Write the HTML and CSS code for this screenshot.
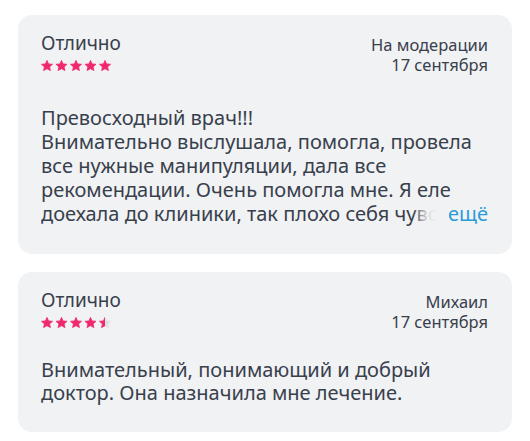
FILE: index.html
```html
<!DOCTYPE html>
<html lang="ru">
<head>
<meta charset="utf-8">
<link rel="stylesheet" href="styles.css">
</head>
<body>
<div class="list">
  <div class="card">
    <div class="head">
      <div class="left">
        <div class="title">Отлично</div>
        <svg class="stars" width="70" height="11" viewBox="0 0 70 11">
          <g fill="#f0286e" stroke="#f0286e" stroke-width="0.8" stroke-linejoin="round">
            <path transform="translate(0.5,0)" d="M5.5 0.4 L7.09 3.92 L11.02 4.31 L8.07 6.93 L8.91 10.59 L5.5 8.7 L2.09 10.59 L2.93 6.93 L-0.02 4.31 L3.91 3.92 Z"/>
            <path transform="translate(15,0)" d="M5.5 0.4 L7.09 3.92 L11.02 4.31 L8.07 6.93 L8.91 10.59 L5.5 8.7 L2.09 10.59 L2.93 6.93 L-0.02 4.31 L3.91 3.92 Z"/>
            <path transform="translate(29.5,0)" d="M5.5 0.4 L7.09 3.92 L11.02 4.31 L8.07 6.93 L8.91 10.59 L5.5 8.7 L2.09 10.59 L2.93 6.93 L-0.02 4.31 L3.91 3.92 Z"/>
            <path transform="translate(44,0)" d="M5.5 0.4 L7.09 3.92 L11.02 4.31 L8.07 6.93 L8.91 10.59 L5.5 8.7 L2.09 10.59 L2.93 6.93 L-0.02 4.31 L3.91 3.92 Z"/>
            <path transform="translate(58.5,0)" d="M5.5 0.4 L7.09 3.92 L11.02 4.31 L8.07 6.93 L8.91 10.59 L5.5 8.7 L2.09 10.59 L2.93 6.93 L-0.02 4.31 L3.91 3.92 Z"/>
          </g>
        </svg>
      </div>
      <div class="meta">На модерации<br>17 сентября</div>
    </div>
    <div class="body clamp">
      <p>Превосходный врач!!!<br>Внимательно выслушала, помогла, провела все нужные манипуляции, дала все рекомендации. Очень помогла мне. Я еле <span class="last">доехала до клиники, так плохо себя чувствовала, а ушла совсем другим человеком.</span></p>
      <span class="more">ещё</span>
    </div>
  </div>
  <div class="card">
    <div class="head">
      <div class="left">
        <div class="title">Отлично</div>
        <svg class="stars" width="70" height="11" viewBox="0 0 70 11">
          <defs>
            <clipPath id="halfclip"><rect x="-1" y="-1" width="6.5" height="13"/></clipPath>
          </defs>
          <g fill="#f0286e" stroke="#f0286e" stroke-width="0.8" stroke-linejoin="round">
            <path transform="translate(0.5,0)" d="M5.5 0.4 L7.09 3.92 L11.02 4.31 L8.07 6.93 L8.91 10.59 L5.5 8.7 L2.09 10.59 L2.93 6.93 L-0.02 4.31 L3.91 3.92 Z"/>
            <path transform="translate(15,0)" d="M5.5 0.4 L7.09 3.92 L11.02 4.31 L8.07 6.93 L8.91 10.59 L5.5 8.7 L2.09 10.59 L2.93 6.93 L-0.02 4.31 L3.91 3.92 Z"/>
            <path transform="translate(29.5,0)" d="M5.5 0.4 L7.09 3.92 L11.02 4.31 L8.07 6.93 L8.91 10.59 L5.5 8.7 L2.09 10.59 L2.93 6.93 L-0.02 4.31 L3.91 3.92 Z"/>
            <path transform="translate(44,0)" d="M5.5 0.4 L7.09 3.92 L11.02 4.31 L8.07 6.93 L8.91 10.59 L5.5 8.7 L2.09 10.59 L2.93 6.93 L-0.02 4.31 L3.91 3.92 Z"/>
          </g>
          <g transform="translate(58.5,0)" stroke-width="0.8" stroke-linejoin="round">
            <path fill="#dcdfe4" stroke="#dcdfe4" d="M5.5 0.4 L7.09 3.92 L11.02 4.31 L8.07 6.93 L8.91 10.59 L5.5 8.7 L2.09 10.59 L2.93 6.93 L-0.02 4.31 L3.91 3.92 Z"/>
            <path fill="#f0286e" stroke="#f0286e" clip-path="url(#halfclip)" d="M5.5 0.4 L7.09 3.92 L11.02 4.31 L8.07 6.93 L8.91 10.59 L5.5 8.7 L2.09 10.59 L2.93 6.93 L-0.02 4.31 L3.91 3.92 Z"/>
          </g>
        </svg>
      </div>
      <div class="meta">Михаил<br>17 сентября</div>
    </div>
    <div class="body">
      <p>Внимательный, понимающий и добрый доктор. Она назначила мне лечение.</p>
    </div>
  </div>
</div>
</body>
</html>
```
FILE: styles.css
```css
* { box-sizing: border-box; }
html, body { margin: 0; background: #ffffff; }
body {
  font-family: "Noto Sans", "Open Sans", sans-serif;
  color: #38404c;
}
.list {
  display: flex;
  flex-direction: column;
  gap: 18px;
  padding: 15px 18px 0 18px;
}
.card {
  background: #f1f2f4;
  border-radius: 14px;
  padding: 16px 24px 28px 23px;
}
.head {
  display: flex;
  justify-content: space-between;
  align-items: flex-start;
}
.title {
  font-size: 19px;
  line-height: 24px;
}
.stars {
  display: block;
  margin-top: 5px;
}
.meta {
  font-size: 16.5px;
  line-height: 19.5px;
  text-align: right;
  padding-top: 4px;
}
.body {
  margin-top: 27px;
  font-size: 20px;
  line-height: 23px;
  position: relative;
}
.body p {
  margin: 0;
}
.clamp {
  margin-top: 32px;
  line-height: 24px;
  max-height: 120px;
  overflow: hidden;
}
.last {
  display: block;
  white-space: nowrap;
  overflow: hidden;
}
.more {
  position: absolute;
  right: 0;
  bottom: 0;
  padding-left: 35px;
  color: #2b9ad9;
  background: linear-gradient(to right, rgba(241,242,244,0) 0, rgba(241,242,244,0.85) 14px, #f1f2f4 24px);
}
```
